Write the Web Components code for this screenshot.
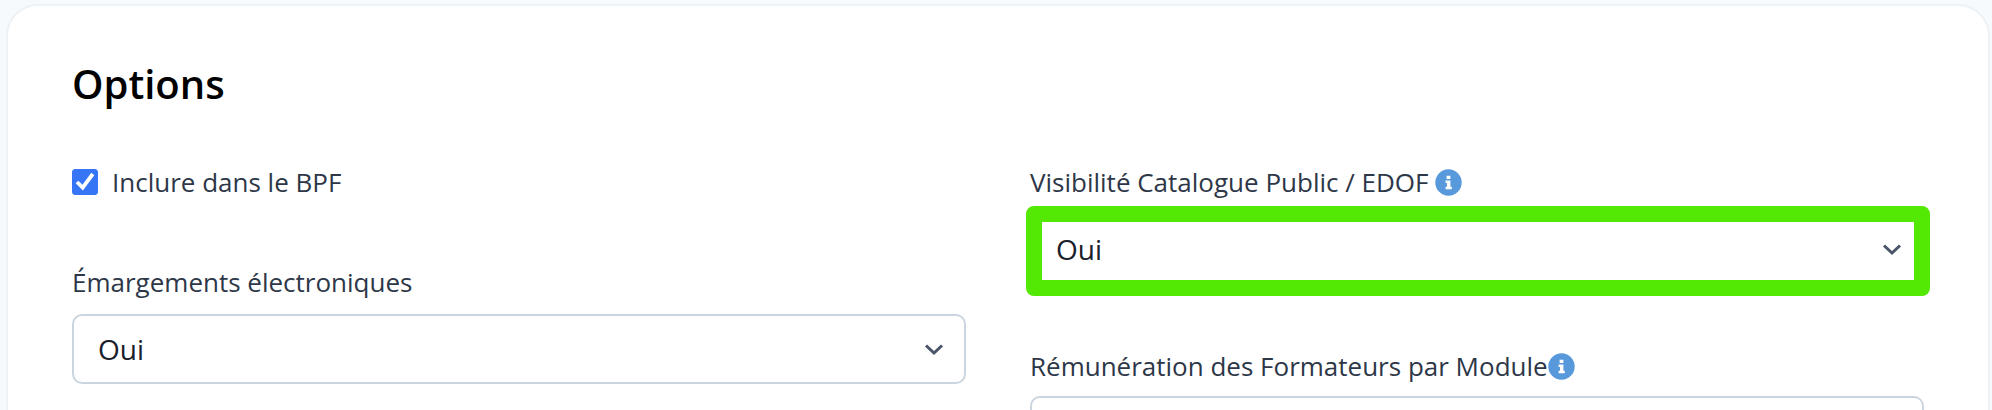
<!DOCTYPE html>
<html lang="fr">
<head>
<meta charset="utf-8">
<meta name="viewport" content="width=device-width, initial-scale=1">
<title>Options</title>
<style>
  html { scrollbar-width: none; }
  body {
    margin: 0;
    padding: 4px 2px 48px 6px;
    background: #f7fafc;
    color: #2d3748;
    font-family: "Open Sans", "Noto Sans", sans-serif;
    font-size: 26px;
    line-height: 40px;
  }
</style>
</head>
<body>
<options-card>
  <span slot="title">Options</span>
  <field-column>
    <check-field checked>Inclure dans le BPF</check-field>
    <select-field label="Émargements électroniques"></select-field>
  </field-column>
  <field-column class="wide">
    <select-field label="Visibilité Catalogue Public / EDOF " info highlight></select-field>
    <select-field label="Rémunération des Formateurs par Module" info class="close"></select-field>
  </field-column>
</options-card>

<script>
const define = (name, html, setup) => {
  const template = document.createElement('template');
  template.innerHTML = html.trim();
  customElements.define(name, class extends HTMLElement {
    constructor() {
      super();
      this.attachShadow({ mode: 'open' }).append(template.content.cloneNode(true));
    }
    connectedCallback() {
      if (setup) setup(this, this.shadowRoot);
    }
  });
};

define('options-card', `
  <style>
    :host {
      display: block;
      padding: 48px 64px 64px;
      background: #fff;
      border: 2px solid #edf2f7;
      border-radius: 32px;
    }
    h2 {
      margin: 0 0 48px;
      color: #000;
      font-size: 40px;
      font-weight: 600;
      line-height: 60px;
    }
    .columns {
      display: grid;
      grid-template-columns: 1fr 1fr;
      gap: 64px;
      align-items: start;
    }
    ::slotted(.wide) { --row-gap: 62px; }
  </style>
  <h2><slot name="title"></slot></h2>
  <div class="columns"><slot></slot></div>
`);

define('field-column', `
  <style>
    :host { display: flex; flex-direction: column; gap: var(--row-gap, 60px); }
    ::slotted(.close) { --label-gap: 10px; }
  </style>
  <slot></slot>
`);

define('check-field', `
  <style>
    :host { display: block; }
    label { display: flex; align-items: center; gap: 14px; }
    .box { display: grid; width: 26px; height: 26px; }
    input, svg { grid-area: 1 / 1; width: 26px; height: 26px; margin: 0; }
    input { appearance: none; border: 1px solid #a0aec0; border-radius: 3px; background: #fff; }
    input:checked { border-color: #3575f6; background: #3575f6; }
    svg { pointer-events: none; visibility: hidden; }
    input:checked + svg { visibility: visible; }
  </style>
  <label>
    <span class="box">
      <input type="checkbox">
      <svg viewBox="0 0 26 26" fill="none" stroke="#fff" stroke-width="3.8" aria-hidden="true">
        <path d="M5 13 10.7 18.6 20.8 5"/>
      </svg>
    </span>
    <slot></slot>
  </label>
`, (host, root) => {
  root.querySelector('input').checked = host.hasAttribute('checked');
});

define('info-icon', `
  <style>
    :host { display: inline; white-space: normal; }
    svg { width: 27px; height: 27px; vertical-align: -4px; }
  </style><svg viewBox="0 0 27 27" aria-hidden="true">
    <circle cx="13.5" cy="13.5" r="13.2" fill="#5899dc"/>
    <path fill="#fff" d="M11.6 6.8h3.8v3.2h-3.8zM10.6 11.6h4.8v6.2h1.4v2.4h-6.2v-2.4H12v-3.8h-1.4z"/>
  </svg>
`);

define('select-field', `
  <style>
    :host { display: flex; flex-direction: column; gap: var(--label-gap, 12px); }
    label { white-space: pre-wrap; }
    info-icon { display: none; }
    :host([info]) info-icon { display: inline; }
    .control { display: grid; position: relative; }
    select {
      grid-area: 1 / 1;
      width: 100%;
      height: 70px;
      margin: 0;
      padding: 0 64px 0 24px;
      appearance: none;
      border: 2px solid #cbd5e0;
      border-radius: 10px;
      background: #fff;
      color: #1a202c;
      font: inherit;
      font-size: 28px;
    }
    .chevron {
      grid-area: 1 / 1;
      place-self: center end;
      width: 20px;
      height: 14px;
      margin-right: 22px;
      pointer-events: none;
    }
    :host([highlight]) .control::after {
      content: "";
      position: absolute;
      inset: -8px -6px -12px -4px;
      border: 16px solid #54e805;
      border-radius: 8px;
      pointer-events: none;
    }
  </style>
  <div><label for="control"></label><info-icon></info-icon></div>
  <div class="control">
    <select id="control"><option>Oui</option><option>Non</option></select>
    <svg class="chevron" viewBox="0 0 20 14" fill="none" stroke="#4a5568" stroke-width="3" aria-hidden="true">
      <path d="M2 3.5 10 11 18 3.5"/>
    </svg>
  </div>
`, (host, root) => {
  root.querySelector('label').textContent = host.getAttribute('label');
});
</script>
</body>
</html>
